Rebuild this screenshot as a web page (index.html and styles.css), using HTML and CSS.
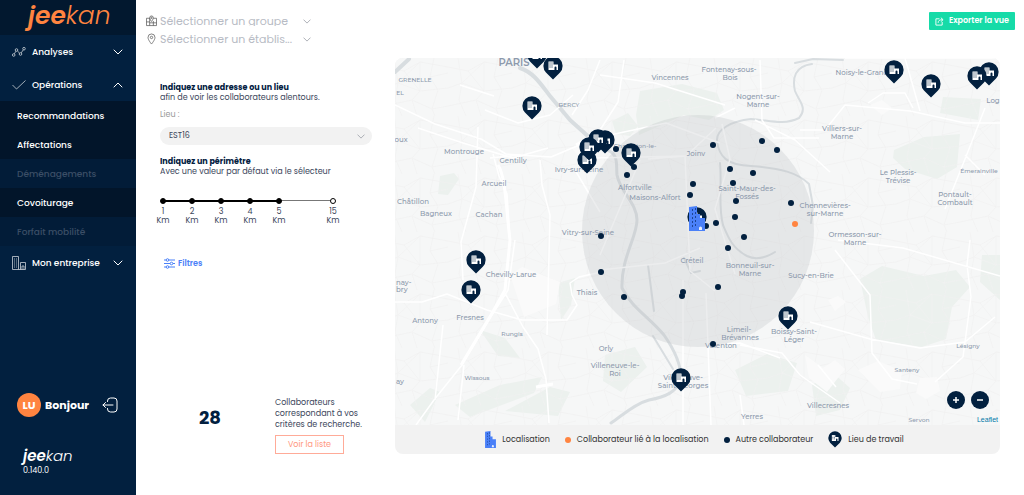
FILE: index.html
```html
<!DOCTYPE html>
<html lang="fr">
<head>
<meta charset="utf-8">
<meta name="viewport" content="width=device-width, initial-scale=1">
<title>Jeekan - Covoiturage</title>
<link rel="stylesheet" href="styles.css">
</head>
<body>
<svg class="sprite" aria-hidden="true">
  <symbol id="down" viewBox="0 0 10 6"><path d="M1 1l4 4 4-4" fill="none" stroke="currentColor" stroke-linecap="round" stroke-linejoin="round"/></symbol>
  <symbol id="pin" viewBox="-10 -10 20 24"><path d="M0 13.500L-7 6.500A9.600 9.600 0 1 1 7 6.500Z" fill="#02203f"/><path fill="#fff" fill-rule="evenodd" d="M-4.500-4.500h5v3h4.500v5.500h-1.500v-2.500a1 1 0 0 0-2 0v2.500h-6zM-3.500-3.500v1h1v-1zM-1.500-3.500v1h1v-1zM-3.500-1.500v1h1v-1zM-1.500-1.500v1h1v-1zM-3.500.5v1h1v-1zM-1.500.5v1h1v-1z"/></symbol>
  <symbol id="tower" viewBox="0 0 16 25"><path d="M0 1l8-1v8h3v4h5v13H0z" fill="#4a80f8"/><path d="M3 3h1v2H3zM6 2h1v2H6zM3 7h1v2H3zM6 6h1v2H6zM3 11h1v2H3zM6 10h1v2H6zM3 15h1v2H3zM6 14h1v2H6zM3 19h1v2H3zM6 18h1v2H6z" fill="#1d4495"/><path d="M10 24v-2a1.500 1.500 0 0 1 3 0v2z" fill="#e8efff"/></symbol>
</svg>
<div class="app">
  <aside class="sidebar">
    <div class="brand logo"><b>jee</b>kan</div>
    <nav>
      <button class="group"><svg class="gicon" viewBox="0 0 14 10" fill="none" stroke="currentColor" stroke-width=".8"><circle cx="1.700" cy="8" r="1.300"/><circle cx="4.500" cy="3" r="1.300"/><circle cx="8.500" cy="7" r="1.300"/><circle cx="12" cy="1.700" r="1.300"/><path d="M2.300 6.800l1.600-2.600M5.400 4l2.200 2.100M9.200 5.900l2.100-3.100"/></svg><span>Analyses</span><svg class="chev"><use href="#down"/></svg></button>
      <button class="group" aria-expanded="true"><svg class="gicon" viewBox="0 0 14 10" fill="none" stroke="currentColor" stroke-width=".8"><path d="M.5 5l4 4L13.500.5"/></svg><span>Opérations</span><svg class="chev up"><use href="#down"/></svg></button>
      <ul>
        <li><a href="#reco">Recommandations</a></li>
        <li><a href="#aff">Affectations</a></li>
        <li><a class="off" aria-disabled="true" href="#dem">Déménagements</a></li>
        <li><a href="#cov">Covoiturage</a></li>
        <li><a class="off" aria-disabled="true" href="#forfait">Forfait mobilité</a></li>
      </ul>
      <button class="group"><svg class="gicon tall" viewBox="0 0 14 14" fill="none" stroke="currentColor" stroke-width=".8"><path d="M.5 13.500V.5h6v13M.5 13.500h13v-7h-5v7M10 13.500V10h2v3.500M2 3h1M4 3h1M2 5h1M4 5h1M2 7h1M4 7h1M2 9h1M4 9h1M2 11h1M4 11h1"/></svg><span>Mon entreprise</span><svg class="chev"><use href="#down"/></svg></button>
    </nav>
    <div class="user"><span class="avatar">LU</span><b>Bonjour</b><button aria-label="Se déconnecter"><svg viewBox="0 0 16 16" fill="none" stroke="currentColor" stroke-linecap="round" stroke-linejoin="round"><path d="M5.500 4.500V4a3 3 0 0 1 3-3H12a3 3 0 0 1 3 3v8a3 3 0 0 1-3 3H8.500a3 3 0 0 1-3-3v-.5M11 8H1M3.500 5.500L1 8l2.500 2.500"/></svg></button></div>
    <footer><div class="logo small"><b>jee</b>kan</div><div>0.140.0</div></footer>
  </aside>
  <main>
    <header>
      <div class="scopes">
        <label class="scope"><svg viewBox="0 0 12 12" fill="none" stroke="currentColor" stroke-width=".8"><path d="M4 3H.5v8h11V3H8M4 3v8M8 6v5M.5 7H4M4 8h7.500M6 6.500S4 4.300 4 2.500a2 2 0 0 1 4 0C8 4.300 6 6.500 6 6.500z"/><circle cx="6" cy="2.500" r=".7"/></svg><select aria-label="Groupe"><option>Sélectionner un groupe</option></select><svg class="arrow"><use href="#down"/></svg></label>
        <label class="scope"><svg viewBox="0 0 12 12" fill="none" stroke="currentColor" stroke-width=".8"><path d="M6 11.500S2.200 7 2.200 4.300a3.800 3.800 0 0 1 7.600 0C9.800 7 6 11.500 6 11.500z"/><circle cx="6" cy="4.300" r="1.300"/></svg><select aria-label="Établissement"><option>Sélectionner un établis...</option></select><svg class="arrow"><use href="#down"/></svg></label>
      </div>
      <button class="export"><svg viewBox="0 0 10 10" fill="none" stroke="currentColor"><path d="M5 2H1v7h7V5.500M3.500 6.500C3.500 4 5 3 8.500 3M6.500.8L9 3 6.500 5.200"/></svg>Exporter la vue</button>
    </header>
    <div class="content">
      <section class="panel">
        <h2>Indiquez une adresse ou un lieu</h2>
        <p>afin de voir les collaborateurs alentours.</p>
        <label class="muted" for="lieu">Lieu :</label>
        <div class="place"><select id="lieu"><option>EST16</option></select><svg class="arrow"><use href="#down"/></svg></div>
        <h2>Indiquez un périmètre</h2>
        <p>Avec une valeur par défaut via le sélecteur</p>
        <ol class="range">
          <li><label><input type="radio" name="km">1<br>Km</label></li>
          <li><label><input type="radio" name="km">2<br>Km</label></li>
          <li><label><input type="radio" name="km">3<br>Km</label></li>
          <li><label><input type="radio" name="km">4<br>Km</label></li>
          <li class="wide"><label><input type="radio" name="km" checked>5<br>Km</label></li>
          <li><label><input type="radio" name="km">15<br>Km</label></li>
        </ol>
        <button class="filters"><svg viewBox="0 0 11 11" fill="none" stroke="currentColor"><path d="M0 2h2M5 2h6M0 5.500h6M9 5.500h2M0 9h2M5 9h6"/><circle cx="3.500" cy="2" r="1.300"/><circle cx="7.500" cy="5.500" r="1.300"/><circle cx="3.500" cy="9" r="1.300"/></svg>Filtres</button>
        <div class="result"><strong>28</strong><div><p>Collaborateurs<br>correspondant à vos<br>critères de recherche.</p><button>Voir la liste</button></div></div>
      </section>
      <section class="mapcard">
        <div class="map">
          <svg viewBox="395 58 605 367" role="img" aria-label="Carte des collaborateurs">
            <defs>
              <pattern id="streets" width="64" height="58" patternUnits="userSpaceOnUse"><path d="M0 9l20 4 16-9 28 5M0 30l14-5 22 8 28-3M0 48l28-6 20 9 16-3M10 0l4 25-3 17 7 16M36 4v29l-8 9 5 16M50 0l-4 19 8 13-6 19 3 7M20 13l16 20M46 19l18-4M14 25l22-21" fill="none" stroke="#f0f1f1" stroke-width=".7"/></pattern>
            </defs>
            <path fill="#f6f7f7" d="M395 58h605v367H395z"/>
            <g fill="#ecf1ee">
              <path d="M640 91l42-7 35 9 7 17-15 10-25-5-45 20-3-20zM612 121l16-8 10 13-8 10-14-2zM440 176l14-3 5 6-11 16-10-1zM943 97l38 2-3 21-38-7zM894 150l30-13 36-3-3 33-20 12-32-10-12-11zM860 279l22-13 42 10 32-6 14 17-18 20-6 32-24 8-46-7-8-23zM558 283l17-5-4 27-10 15zM455 405l45-20 42-8-8 16-64 24zM505 411l45-24 20 5-12 24zM735 370l32-16 30 9-9 28-42 5zM605 355l30-8 12 20-26 25-18-11zM982 255h18v45l-20-18zM812 385l20-13 18 16-10 22-24 6zM410 405l20-17 10 4-15 30zM480 330l25 8 15 20-22-2z"/>
            </g>
            <path fill="url(#streets)" d="M395 58h605v367H395z"/>
            <g fill="#fafafa"><path d="M510 275l12-8 38 15-4 22-32 13zM572 148l14-8 3 10-10 7zM858 370l20-9 24 10-2 18-20 3zM870 105l12-5 10 8-10 7zM828 300l10-4 8 6-11 9zM920 378l17-1 3 14-14 8-10-6zM805 355l18 13 12-8 10 9-18 23-18-14z"/></g>
            <g fill="none" stroke="#d8dde0" stroke-linecap="round" stroke-linejoin="round">
              <path stroke-width="4" d="M395 72l14-13M520 68c14 5 20 15 30 28l20 24 20 18"/>
              <path stroke-width="3" d="M607 150c12 4 9 15 10 25 3 17 20 28 20 45s-16 38-15 68c10 20 26 28 42 47 7 10 17 26 17 43-3 14-16 19-32 22-15 4-26 15-38 23"/>
              <path stroke-width="2" d="M812 64c-17 2-20 14-17 27 4 10 13 17 4 27-16 8-30 2-48 1-19 2-35 10-34 22 2 16 10 24 34 25 30 2 47 7 58 18l4 22-2 17M720 163c2 22-2 44 3 62 5 12 9 23 24 31 10 5 20 1 28-4"/>
              <path stroke-width="2" d="M795 63l18-4 30 1M648 265l6 46M653 336l20 33M684 258l7 15 9-2"/>
            </g>
            <g fill="none" stroke="#fff" stroke-width="1.500" stroke-linejoin="round">
              <path d="M395 105l40 19 46 15 25 15 45 3 45-19 70-15 54 20M418 128l45 15 50 15 35-10M460 85l34 11M485 110l33 13 32-8 23-20M493 154l6 22 8 18 3 45M478 127l-2 60-15 55 2 38M600 60l-12 30-16 25M490 158l30-3M540 160l2 25 8 30-3 120M575 170l25 42M395 302l27 0 25-8 40 16 35 10h45l10-15-5-10-2-12 9-6 22-5M515 240l-7 50-16 25-30 50-28 35-18 25M505 293l18 34 15 22 8 30 3 44M443 325l-8 75M464 365l-6 55M600 75l55 8 70 22M624 60l-6 42-18 28M715 118l20-10M760 60l2 60 12 18h45M716 128l-30 28-38 3M595 158l90-2 5 115 25 20M640 160l-40 95M600 270l65-7 35-15M683 280v145M706 293l5 132M722 124l8 35-15 50 20 65M755 120l40 20 35 32M800 130h25l20-25 65 6 55 12h35M868 103l15-10h22l8 15M905 58l15 53M985 108l-18 46-22 55M845 58h155M965 155l20 20M838 240l65 8 97 28M970 240l-3 25 4 32-8 60-28 25M810 322l60 17 50 9 45-6 30-25M835 250l35 45 2 58 20 26 25 5M818 365l18 22M740 395l4 30M740 345l42 8 18 22 40 28M710 345l30-2 40 15"/>
            </g>
            <g fill="none" stroke="#fff" stroke-width="3"><path d="M498 165c8 12 8 45 12 75l-5 50-14 25-30 50M590 137l-14 8M536 387l17-3"/></g>
            <circle cx="698" cy="231" r="116" fill="#bcbec2" fill-opacity=".28"/>
            <g class="places">
              <text x="514" y="66" class="city">PARIS</text><text x="415" y="82" class="tiny">GRENELLE</text><text x="569" y="107" class="tiny">BERCY</text><text x="400" y="95" class="tiny">EL</text><text x="401" y="142">oux</text>
              <text x="464" y="154">Montrouge</text><text x="513" y="163">Gentilly</text><text x="494" y="186">Arcueil</text><text x="413" y="204">Châtillon</text><text x="436" y="216">Bagneux</text><text x="489" y="217">Cachan</text><text x="579" y="172">Ivry-sur-Seine</text><text x="588" y="235">Vitry-sur-Seine</text>
              <text x="511" y="277">Chevilly-Larue</text><text x="396" y="285" class="edge">nay-</text><text x="396" y="292" class="edge">bry</text><text x="425" y="323">Antony</text><text x="470" y="320">Fresnes</text><text x="512" y="336" class="tiny">Rungis</text><text x="477" y="380" class="tiny">Wissous</text><text x="396" y="384" class="edge">ay</text><text x="587" y="295">Thiais</text>
              <text x="670" y="80">Vincennes</text><text x="729" y="72">Fontenay-sous-</text><text x="730" y="80">Bois</text><text x="758" y="99">Nogent-sur-</text><text x="758" y="107">Marne</text><text x="842" y="131">Villiers-sur-</text><text x="842" y="139">Marne</text><text x="862" y="75">Noisy-le-Grand</text><text x="993" y="103">Log</text>
              <text x="635" y="148" class="tiny">Charenton-le-</text><text x="696" y="156">Joinv</text><text x="635" y="190">Alfortville</text><text x="655" y="200">Maisons-Alfort</text><text x="747" y="191">Saint-Maur-des-</text><text x="747" y="199">Fossés</text><text x="825" y="208">Chennevières-</text><text x="825" y="216">sur-Marne</text><text x="898" y="175">Le Plessis-</text><text x="898" y="183">Trévise</text><text x="979" y="173" class="tiny">Émerainville</text><text x="955" y="197">Pontault-</text><text x="955" y="205">Combault</text><text x="855" y="237">Ormesson-sur-</text><text x="855" y="245">Marne</text>
              <text x="692" y="263">Créteil</text><text x="750" y="268">Bonneuil-sur-</text><text x="750" y="276">Marne</text><text x="811" y="278">Sucy-en-Brie</text><text x="739" y="332">Limeil-</text><text x="740" y="340">Brévannes</text><text x="721" y="348">Valenton</text><text x="794" y="334">Boissy-Saint-</text><text x="794" y="342">Léger</text><text x="606" y="351">Orly</text><text x="615" y="368">Villeneuve-le-</text><text x="615" y="376">Roi</text><text x="683" y="380">Villeneuve-</text><text x="683" y="388">Saint-Georges</text><text x="752" y="419">Yerres</text><text x="828" y="408">Villecresnes</text><text x="907" y="372" class="tiny">Santeny</text><text x="968" y="348" class="tiny">Lésigny</text><text x="919" y="422" class="tiny">Servon</text>
            </g>
            <g fill="#02203f">
              <circle cx="713" cy="145" r="3"/><circle cx="762" cy="141" r="3"/><circle cx="777" cy="150" r="3"/><circle cx="730" cy="169" r="3"/><circle cx="753" cy="173" r="3"/><circle cx="733" cy="183" r="3"/><circle cx="693" cy="184" r="3"/><circle cx="690" cy="195" r="3"/><circle cx="736" cy="201" r="3"/><circle cx="735" cy="217" r="3"/><circle cx="791" cy="203" r="3"/><circle cx="716" cy="223" r="3"/><circle cx="744" cy="237" r="3"/><circle cx="627" cy="175" r="3"/><circle cx="634" cy="167" r="3"/><circle cx="616" cy="149" r="3"/><circle cx="601" cy="236" r="3"/><circle cx="601" cy="272" r="3"/><circle cx="728" cy="248" r="3"/><circle cx="718" cy="287" r="3"/><circle cx="683" cy="292" r="3"/><circle cx="682" cy="296" r="3"/><circle cx="624" cy="297" r="3"/><circle cx="713" cy="344" r="3"/>
            </g>
            <circle cx="795" cy="224" r="3" fill="#ff8440"/>
            <g>
              <use href="#pin" x="527" y="45" width="20" height="24"/><use href="#pin" x="543" y="56" width="20" height="24"/><use href="#pin" x="522" y="96" width="20" height="24"/><use href="#pin" x="577" y="150" width="20" height="24"/><use href="#pin" x="595" y="130" width="20" height="24"/><use href="#pin" x="588" y="129" width="20" height="24"/><use href="#pin" x="579" y="137" width="20" height="24"/><use href="#pin" x="621" y="143" width="20" height="24"/><use href="#pin" x="466" y="250" width="20" height="24"/><use href="#pin" x="461" y="280" width="20" height="24"/><use href="#pin" x="778" y="306" width="20" height="24"/><use href="#pin" x="671" y="368" width="20" height="24"/><use href="#pin" x="884" y="60" width="20" height="24"/><use href="#pin" x="921" y="74" width="20" height="24"/><use href="#pin" x="979" y="62" width="20" height="24"/><use href="#pin" x="967" y="66" width="20" height="24"/><use href="#pin" x="687" y="207" width="20" height="24"/>
            </g>
            <circle cx="706" cy="226" r="3" fill="#02203f"/>
            <use href="#tower" x="689" y="206" width="16" height="25"/>
          </svg>
          <div class="zoom"><button aria-label="Zoom avant"><svg viewBox="0 0 8 8"><path d="M4 1v6M1 4h6" stroke="currentColor" stroke-width="1.500"/></svg></button><button aria-label="Zoom arrière"><svg viewBox="0 0 8 8"><path d="M1 4h6" stroke="currentColor" stroke-width="1.500"/></svg></button></div>
          <a class="leaflet" href="#leaflet">Leaflet</a>
        </div>
        <ul class="legend">
          <li><svg class="ltower"><use href="#tower"/></svg>Localisation</li>
          <li><i class="dot orange"></i>Collaborateur lié à la localisation</li>
          <li><i class="dot"></i>Autre collaborateur</li>
          <li><svg class="lpin"><use href="#pin"/></svg>Lieu de travail</li>
        </ul>
      </section>
    </div>
  </main>
</div>
</body>
</html>
```
FILE: styles.css
```css
* { box-sizing: border-box; }
body { margin: 0; background: #fff; color: #3b465b; font: 8px/10px Poppins, Inter, "Open Sans", sans-serif; }
button, select, input { font: inherit; color: inherit; margin: 0; }
button { border: 0; padding: 0; background: none; cursor: pointer; }
select { appearance: none; border: 0; background: none; padding: 0; outline: 0; min-width: 0; flex: 1; }
ul, ol { list-style: none; margin: 0; padding: 0; }
p, h2 { margin: 0; }
a { text-decoration: none; }
.sprite { position: absolute; width: 0; height: 0; }
.app { display: flex; min-height: 100vh; }

.sidebar { flex: 0 0 136px; display: flex; flex-direction: column; background: #02203f; color: #fff; }
.logo { font-style: italic; font-weight: 300; }
.logo b { font-weight: 600; }
.brand { height: 35px; padding-left: 28px; background: #02182f; color: #ff8440; font-size: 25px; line-height: 32px; }
.group { display: flex; align-items: center; gap: 6px; width: 100%; height: 33px; padding: 0 13px 0 12px; font-size: 9px; font-weight: 500; text-align: left; white-space: nowrap; }
.group span { flex: 1; }
.gicon { width: 14px; height: 10px; opacity: .8; }
.gicon.tall { height: 14px; }
.chev { width: 10px; height: 6px; }
.up { transform: rotate(180deg); }
.sidebar li a { display: flex; align-items: center; height: 29px; padding-left: 17px; background: #02152a; color: #fff; font-size: 9px; font-weight: 500; }
.sidebar li a.off { background: #021c38; color: #3b4e66; }
.user { display: flex; align-items: center; gap: 4px; margin-top: auto; padding: 0 18px 0 17px; font-size: 11px; }
.avatar { display: grid; place-items: center; width: 24px; height: 24px; border-radius: 50%; background: #ff8440; font-size: 11px; font-weight: 700; }
.user button { width: 16px; height: 16px; margin-left: auto; }
.user svg { display: block; width: 16px; height: 16px; }
.sidebar footer { padding: 29px 23px 19px; }
.small { font-size: 15px; line-height: 20px; }

main { flex: 1; min-width: 0; }
header { display: flex; align-items: flex-start; justify-content: space-between; padding: 12px 9px 0 10px; }
.scope { display: flex; align-items: center; gap: 3px; width: 165px; height: 18px; color: #b7bbc4; font-size: 11px; }
.scope svg { width: 11px; height: 12px; color: #555; }
.scope .arrow, .arrow { width: 8px; height: 5px; color: #9a9ea6; }
.export { display: flex; align-items: center; justify-content: center; gap: 5px; width: 86px; height: 18px; background: #16dba8; color: #fff; font-weight: 600; border-radius: 1px; white-space: nowrap; }
.export svg { width: 9px; height: 9px; }
.content { display: grid; grid-template-columns: 235px 1fr; padding: 10px 24px 0; }
.panel { display: flex; flex-direction: column; padding: 24px 23px 0 0; }
h2 { font-size: 8px; line-height: 11px; font-weight: 700; color: #02203f; }
.muted { color: #999; margin: 7px 0; }
.place { display: flex; align-items: center; height: 18px; margin-bottom: 11px; padding: 0 7px 0 9px; border-radius: 9px; background: #f2f2f2; }
.range { display: flex; margin: 21px 0 0 -9px; }
.range li { position: relative; width: 29px; }
.range .wide { width: 54px; }
.range li:not(:last-child)::before { content: ""; position: absolute; top: 2px; left: 12px; width: 100%; height: 2px; background: #000; }
.range li:has(:checked)::before, .range li:has(:checked) ~ li::before { height: 1px; background: #777; }
.range label { position: relative; display: flow-root; width: 24px; text-align: center; line-height: 9px; }
.range input { appearance: none; display: block; width: 6px; height: 6px; margin: 0 auto 3px; border: 1px solid #000; border-radius: 50%; background: #000; }
.range li:has(:checked) ~ li input { background: #fff; }
.filters { display: flex; align-items: center; gap: 3px; margin: 33px 0 0 4px; color: #4a80f8; font-weight: 600; }
.filters svg { width: 11px; height: 11px; }
.result { display: grid; grid-template-columns: 100px 1fr; column-gap: 15px; margin-top: auto; }
.result strong { margin-top: 11px; text-align: center; color: #02203f; font-size: 18px; line-height: 20px; }
.result p { line-height: 11px; }
.result button { width: 69px; height: 19px; margin-top: 5px; border: 1px solid #ffab98; color: #ff9780; }

.mapcard { border-radius: 8px; overflow: hidden; background: #f2f2f2; }
.map { position: relative; }
.map > svg { display: block; width: 100%; }
.places { font-family: Montserrat, Poppins, Inter, sans-serif; font-size: 7px; font-weight: 500; fill: #8c99ac; text-anchor: middle; }
.places .tiny { font-size: 6px; }
.places .city { font-size: 10px; font-weight: 600; }
.places .edge { text-anchor: start; }
.zoom { position: absolute; right: 11px; bottom: 16px; display: flex; gap: 6px; }
.zoom button { display: grid; place-items: center; width: 18px; height: 18px; border-radius: 50%; background: #02203f; color: #fff; }
.zoom svg { width: 8px; height: 8px; }
.leaflet { position: absolute; right: 2px; bottom: 0; color: #0078a8; font-family: "Liberation Sans", sans-serif; font-size: 7px; }
.legend { display: flex; align-items: center; justify-content: center; gap: 15px; height: 29px; padding-right: 6px; color: #333; }
.legend li { display: flex; align-items: center; gap: 6px; }
.ltower { width: 11px; height: 17px; }
.lpin { width: 14px; height: 17px; }
.dot { width: 6px; height: 6px; border-radius: 50%; background: #02203f; }
.orange { background: #ff8440; }
```
